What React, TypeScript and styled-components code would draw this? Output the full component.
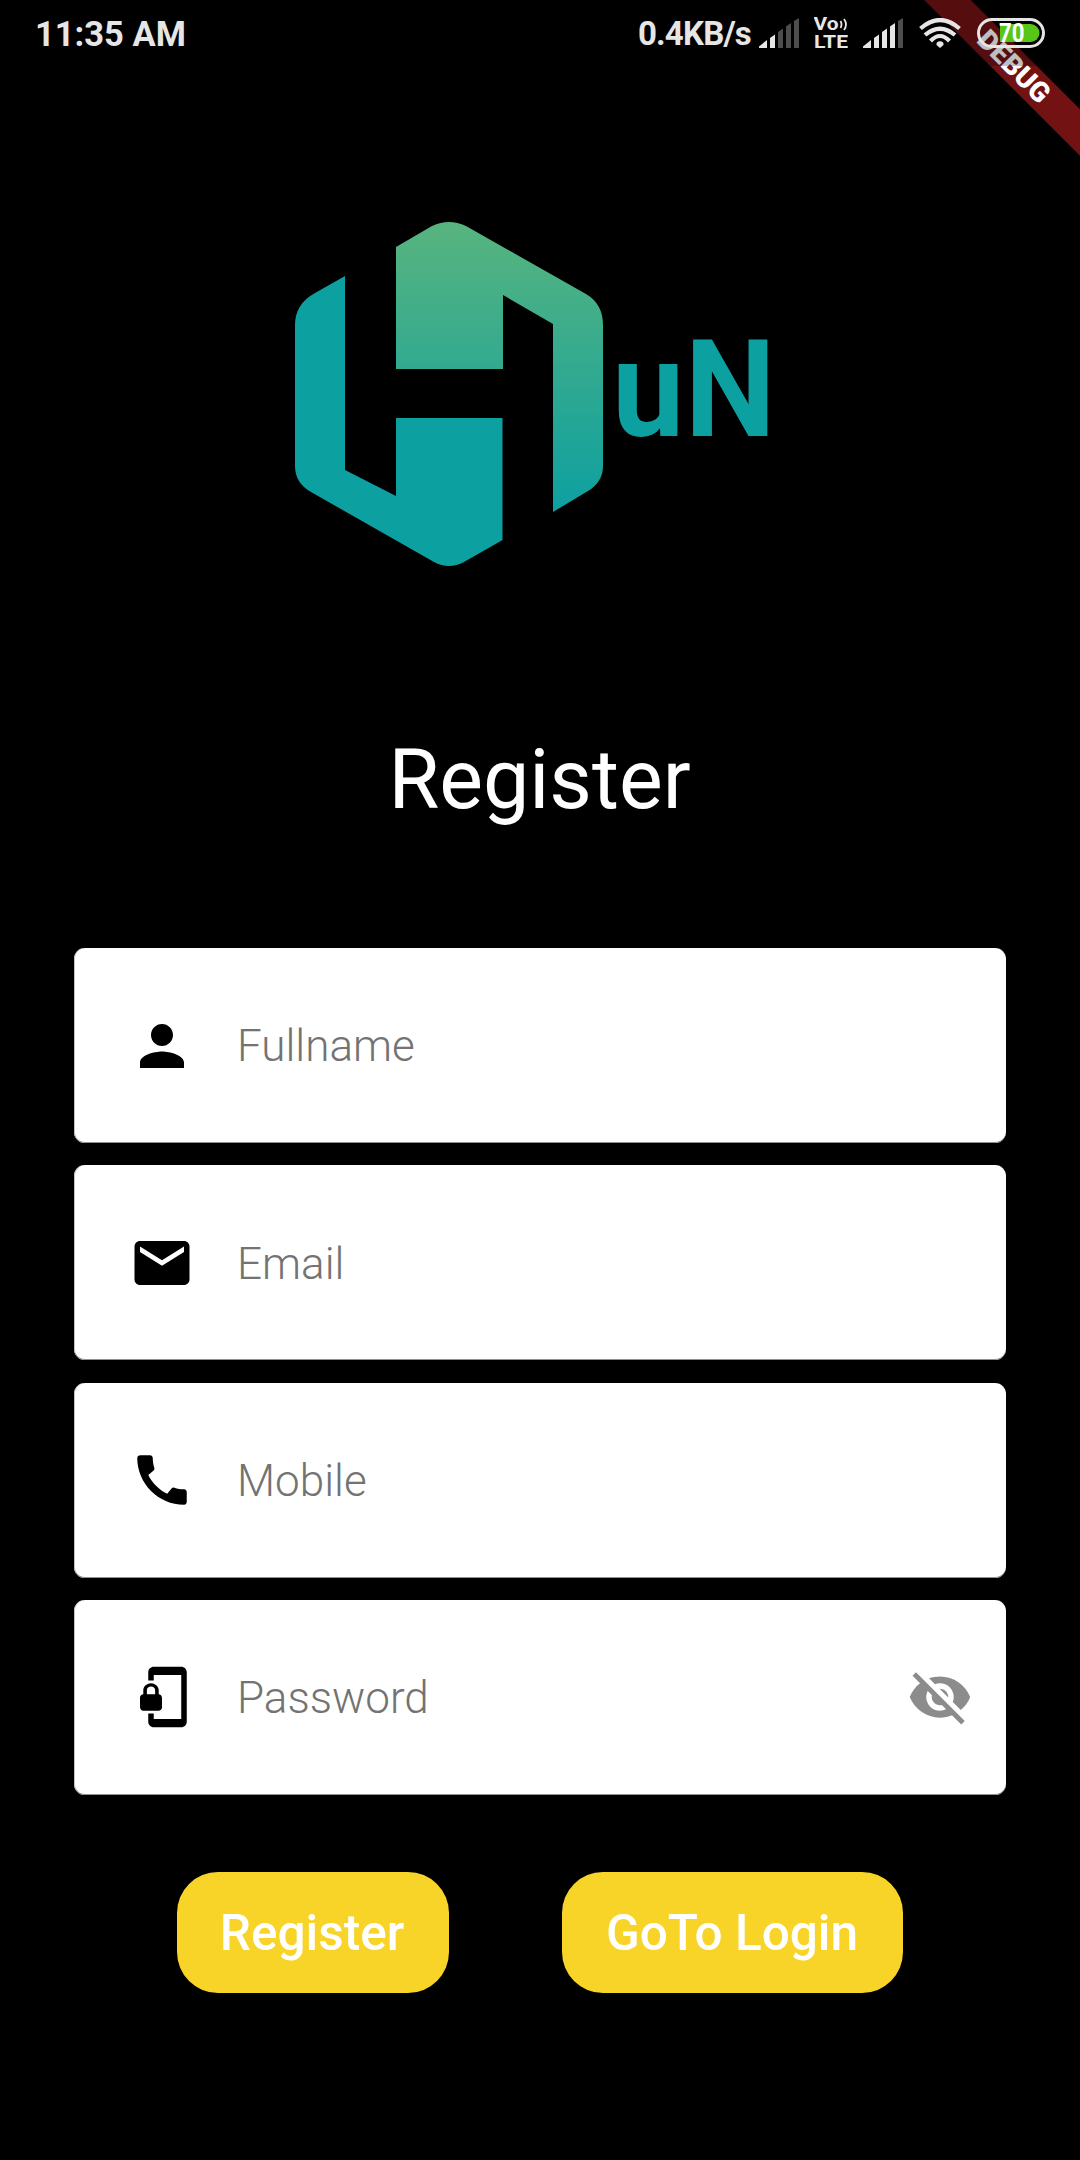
import React from "react";
import styled, { createGlobalStyle } from "styled-components";

const GlobalStyle = createGlobalStyle`
  *, *::before, *::after { box-sizing: border-box; }
  body { margin: 0; background: #000; }
`;

const Screen = styled.div`
  position: relative;
  display: flex;
  flex-direction: column;
  align-items: center;
  width: 1080px;
  height: 2160px;
  overflow: hidden;
  background: #000;
  font-family: Roboto, "Noto Sans", sans-serif;
`;

const StatusBar = styled.header`
  position: relative;
  z-index: 2;
  display: flex;
  align-items: center;
  width: 100%;
  height: 66px;
  padding: 0 35px;
  background: rgba(0, 0, 0, 0.25);
  color: #e6e6e6;
`;

const Clock = styled.span`
  margin-right: auto;
  padding-top: 2px;
  font-size: 34.5px;
  font-weight: 700;
  line-height: 40px;
  white-space: nowrap;
`;

const NetworkSpeed = styled.span`
  margin-right: 8px;
  padding-top: 2px;
  font-size: 33px;
  font-weight: 700;
  letter-spacing: -0.8px;
  line-height: 40px;
  white-space: nowrap;
`;

const StatusIcon = styled.svg<{ $after?: number }>`
  flex: none;
  display: block;
  margin-right: ${(p) => p.$after ?? 0}px;
`;

const DebugBanner = styled.div`
  position: absolute;
  z-index: 1;
  top: 49.5px;
  left: 894px;
  width: 240px;
  height: 33px;
  transform: rotate(45deg);
  background: #731212;
  color: #fff;
  font-size: 28px;
  font-weight: 900;
  line-height: 33px;
  text-align: center;
`;

const Logo = styled.svg`
  flex: none;
  display: block;
  margin-top: 134px;
`;

const Title = styled.h1`
  flex: none;
  margin: 151px 1px 0 0;
  color: #fff;
  font-size: 82.5px;
  font-weight: 400;
  line-height: 97px;
`;

const Form = styled.form`
  display: flex;
  flex-direction: column;
  gap: 22.25px;
  width: 932px;
  margin-top: 120px;
`;

const Field = styled.label`
  display: flex;
  align-items: center;
  height: 195px;
  padding: 0 33.5px 0 55px;
  border-radius: 11px;
  background: #fff;
  box-shadow: inset 0 -1px 0 #8f8f8f, inset 1px 0 0 #c4c4c4;
`;

const FieldIcon = styled.svg<{ $muted?: boolean }>`
  flex: none;
  display: block;
  width: 66px;
  height: 66px;
  fill: ${(p) => (p.$muted ? "#8c8c8c" : "#000")};
`;

const Placeholder = styled.span`
  flex: 1;
  padding: 1.8px 0 0 42px;
  color: #737373;
  font-size: 44px;
  font-weight: 300;
  line-height: 52px;
`;

const Actions = styled.div`
  display: flex;
  justify-content: center;
  gap: 113.5px;
  margin-top: 77px;
`;

const ActionButton = styled.button<{ $width: number }>`
  width: ${(p) => p.$width}px;
  height: 121px;
  padding: 2px 1.5px 0 0;
  border: 0;
  border-radius: 41px;
  background: #f8d428;
  color: #fff;
  font-family: inherit;
  font-size: 49.5px;
  font-weight: 500;
  line-height: 58px;
  white-space: nowrap;
`;

const SIGNAL_BARS = [
  "M0 30V28.5L8 22V30Z",
  "M11 30V20L16 16.500V30Z",
  "M19 30V14L24 10.500V30Z",
  "M27 30V8.500L32 5V30Z",
  "M35 30V3L40 0V30Z",
];

function Signal({ level, after }: { level: number; after: number }) {
  return (
    <StatusIcon width="40" height="30" viewBox="0 0 40 30" $after={after}>
      {SIGNAL_BARS.map((d, i) => (
        <path key={i} d={d} fill={i < level ? "#e6e6e6" : "#4d4d4d"} />
      ))}
    </StatusIcon>
  );
}

function VoLte() {
  return (
    <StatusIcon width="34" height="50" viewBox="0 -9 34 50" $after={15} fill="#e6e6e6">
      <text x="-0.500" y="13" fontSize="18.500" fontWeight="700" textLength="25" lengthAdjust="spacingAndGlyphs">Vo</text>
      <text x="0" y="31" fontSize="18.500" fontWeight="700" textLength="34" lengthAdjust="spacingAndGlyphs">LTE</text>
      <path d="M26.500 4Q28.500 7.500 26.500 11M30 2Q34 7.500 30 13" fill="none" stroke="#e6e6e6" strokeWidth="1.800" />
    </StatusIcon>
  );
}

function Wifi() {
  return (
    <StatusIcon width="42" height="30" viewBox="0 0 42 30" $after={16}>
      <g fill="none" stroke="#e6e6e6" strokeWidth="4.200">
        <path d="M1.500 10.500Q21 -6.500 40.500 10.500" />
        <path d="M6 17Q21 4.500 36 17" />
        <path d="M11.500 23Q21 13 30.500 23" />
      </g>
      <path d="M21 30L17.500 27Q17 23.300 21 23.300Q25 23.300 24.500 27Z" fill="#e6e6e6" />
    </StatusIcon>
  );
}

function Battery() {
  return (
    <StatusIcon width="68" height="30" viewBox="0 0 68 30">
      <rect x="1.500" y="1.500" width="65" height="27" rx="13.500" fill="none" stroke="#e6e6e6" strokeWidth="3" />
      <path d="M23 6H53.500A9 9 0 0 1 53.500 24H23Z" fill="#58c616" />
      <text x="22" y="24" fontSize="25" fontWeight="700" fill="#fff" textLength="25.500" lengthAdjust="spacingAndGlyphs">70</text>
    </StatusIcon>
  );
}

const FIELDS = [
  {
    label: "Fullname",
    icon: "M12 12c2.21 0 4-1.790 4-4s-1.790-4-4-4-4 1.790-4 4 1.790 4 4 4zm0 2c-2.670 0-8 1.340-8 4v2h16v-2c0-2.660-5.330-4-8-4z",
  },
  {
    label: "Email",
    icon: "M20 4H4c-1.100 0-1.990.9-1.990 2L2 18c0 1.100.9 2 2 2h16c1.100 0 2-.9 2-2V6c0-1.100-.9-2-2-2zm0 4l-8 5-8-5V6l8 5 8-5v2z",
  },
  {
    label: "Mobile",
    icon: "M20.010 15.380c-1.230 0-2.420-.2-3.530-.560-.350-.120-.740-.030-1.010.240l-1.570 1.970c-2.830-1.350-5.480-3.900-6.890-6.830l1.950-1.660c.270-.280.350-.670.240-1.020-.370-1.110-.560-2.300-.560-3.530 0-.540-.450-.990-.990-.990H4.190C3.650 3 3 3.240 3 3.990 3 13.280 10.730 21 20.010 21c.710 0 .990-.630.990-1.180v-3.450c0-.540-.450-.990-.990-.990z",
  },
  {
    label: "Password",
    secret: true,
    icon: "M19 1H9c-1.100 0-2 .9-2 2v3h2V4h10v16H9v-2H7v3c0 1.100.9 2 2 2h10c1.100 0 2-.9 2-2V3c0-1.100-.9-2-2-2zm-8.200 10V9.500C10.800 8.100 9.400 7 8 7S5.200 8.100 5.200 9.500V11c-.6 0-1.200.6-1.200 1.200v3.500c0 .7.6 1.300 1.200 1.300h5.500c.7 0 1.300-.6 1.300-1.200v-3.500c0-.7-.6-1.300-1.200-1.300zm-1.300 0h-3V9.500c0-.8.7-1.300 1.500-1.300s1.500.5 1.500 1.300V11z",
  },
];

const EYE_OFF =
  "M12 7c2.760 0 5 2.240 5 5 0 .650-.130 1.260-.360 1.830l2.920 2.920c1.510-1.260 2.700-2.890 3.430-4.750-1.730-4.390-6-7.500-11-7.500-1.400 0-2.740.250-3.980.7l2.160 2.160C10.740 7.130 11.350 7 12 7zM2 4.270l2.280 2.280.460.460C3.080 8.300 1.780 10.020 1 12c1.730 4.390 6 7.500 11 7.500 1.550 0 3.030-.3 4.380-.840l.420.420L19.730 22 21 20.730 3.270 3 2 4.270zM7.530 9.800l1.550 1.550c-.050.210-.080.430-.080.650 0 1.660 1.340 3 3 3 .220 0 .440-.030.650-.080l1.550 1.550c-.670.330-1.410.530-2.200.530-2.760 0-5-2.240-5-5 0-.790.2-1.530.530-2.200zm4.310-.780l3.150 3.150.020-.160c0-1.660-1.340-3-3-3l-.170.010z";

export default function App() {
  return (
    <>
      <GlobalStyle />
      <Screen>
        <DebugBanner>DEBUG</DebugBanner>
        <StatusBar>
          <Clock>11:35 AM</Clock>
          <NetworkSpeed>0.4KB/s</NetworkSpeed>
          <Signal level={2} after={15} />
          <VoLte />
          <Signal level={4} after={16} />
          <Wifi />
          <Battery />
        </StatusBar>

        <Logo width="490" height="380" viewBox="295 200 490 380">
          <defs>
            <linearGradient id="leaf" gradientUnits="userSpaceOnUse" x1="0" y1="222" x2="0" y2="512">
              <stop offset="0" stopColor="#58b47e" />
              <stop offset="1" stopColor="#0da0a1" />
            </linearGradient>
          </defs>
          <path
            d="M345 276L315 293Q295 304 295 325V466Q295 483 311 492L434 562Q449 570 464 562L502.500 540V418H396V496L345 470Z"
            fill="#0da0a1"
          />
          <path
            d="M396 247L432 226Q449 218 466 226L586 294Q603 304 603 325V466Q603 482 588 491L553 512V324L503 295V369H396Z"
            fill="url(#leaf)"
          />
          <text x="644.500 721" y="436" transform="scale(0.95 1)" fontSize="135" fontWeight="700" fill="#0da0a1">uN</text>
        </Logo>

        <Title>Register</Title>

        <Form>
          {FIELDS.map((field) => (
            <Field key={field.label}>
              <FieldIcon viewBox="0 0 24 24">
                <path d={field.icon} />
              </FieldIcon>
              <Placeholder>{field.label}</Placeholder>
              {field.secret && (
                <FieldIcon viewBox="0 0 24 24" $muted>
                  <path d={EYE_OFF} />
                </FieldIcon>
              )}
            </Field>
          ))}
        </Form>

        <Actions>
          <ActionButton type="button" $width={272}>Register</ActionButton>
          <ActionButton type="button" $width={341}>GoTo Login</ActionButton>
        </Actions>
      </Screen>
    </>
  );
}
